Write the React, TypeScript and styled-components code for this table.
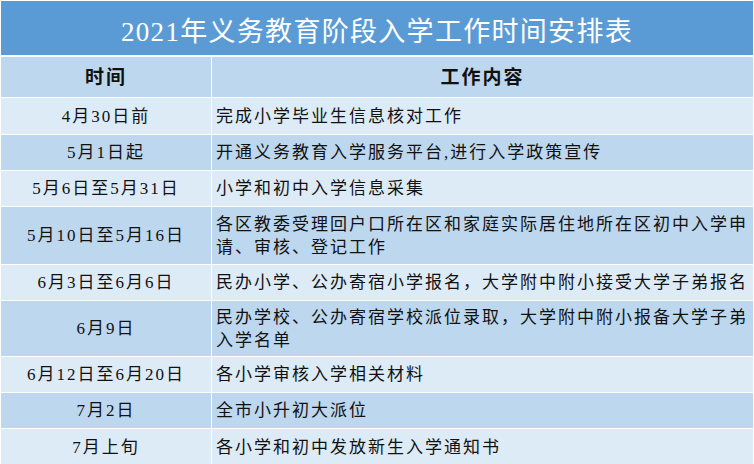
import React from 'react';
import styled, { createGlobalStyle } from 'styled-components';

const GlobalStyle = createGlobalStyle`
  html, body {
    margin: 0;
    padding: 0;
    background: #ffffff;
  }
  body {
    font-family: "Liberation Serif", "Noto Sans CJK SC", serif;
  }
`;

const Sheet = styled.div`
  width: 754px;
  height: 464px;
  box-sizing: border-box;
  padding: 1px 1px 0 1px;
  background: #ffffff;
  overflow: hidden;
`;

const Title = styled.div`
  height: 54px;
  background: #5b9bd5;
  color: #ffffff;
  display: flex;
  align-items: center;
  justify-content: center;
  font-size: 27px;
  letter-spacing: 1.3px;
  padding-top: 2px;
  box-sizing: border-box;
`;

const Grid = styled.div`
  margin-top: 2px;
  display: grid;
  grid-template-columns: 210px 1fr;
  gap: 1px;
  background: #ffffff;
`;

const Cell = styled.div<{ $shade: 'dark' | 'light'; $height: number; $center?: boolean; $bold?: boolean }>`
  height: ${(p) => p.$height}px;
  background: ${(p) => (p.$shade === 'dark' ? '#bdd7ee' : '#ddebf7')};
  color: #111111;
  display: flex;
  align-items: center;
  justify-content: ${(p) => (p.$center ? 'center' : 'flex-start')};
  padding: ${(p) => (p.$center ? '0' : '0 4px 0 4px')};
  box-sizing: border-box;
  font-size: ${(p) => (p.$bold ? '19px' : '17px')};
  font-weight: ${(p) => (p.$bold ? 700 : 400)};
  letter-spacing: 2px;
  line-height: 23px;
`;

const rows = [
  { time: '4月30日前', task: '完成小学毕业生信息核对工作', h: 36 },
  { time: '5月1日起', task: '开通义务教育入学服务平台,进行入学政策宣传', h: 35 },
  { time: '5月6日至5月31日', task: '小学和初中入学信息采集', h: 35 },
  {
    time: '5月10日至5月16日',
    task: ['各区教委受理回户口所在区和家庭实际居住地所在区初中入学申', '请、审核、登记工作'],
    h: 57,
  },
  { time: '6月3日至6月6日', task: '民办小学、公办寄宿小学报名，大学附中附小接受大学子弟报名', h: 35 },
  {
    time: '6月9日',
    task: ['民办学校、公办寄宿学校派位录取，大学附中附小报备大学子弟', '入学名单'],
    h: 55,
  },
  { time: '6月12日至6月20日', task: '各小学审核入学相关材料', h: 35 },
  { time: '7月2日', task: '全市小升初大派位', h: 35 },
  { time: '7月上旬', task: '各小学和初中发放新生入学通知书', h: 36 },
];

const App: React.FC = () => {
  return (
    <>
      <GlobalStyle />
      <Sheet>
        <Title>2021年义务教育阶段入学工作时间安排表</Title>
        <Grid>
          <Cell $shade="dark" $height={40} $center $bold>
            时间
          </Cell>
          <Cell $shade="dark" $height={40} $center $bold>
            工作内容
          </Cell>
          {rows.map((row, i) => {
            const shade = i % 2 === 0 ? 'light' : 'dark';
            return (
              <React.Fragment key={row.time}>
                <Cell $shade={shade} $height={row.h} $center>
                  {row.time}
                </Cell>
                <Cell $shade={shade} $height={row.h}>
                  {Array.isArray(row.task) ? (
                    <div>
                      {row.task[0]}
                      <br />
                      {row.task[1]}
                    </div>
                  ) : (
                    row.task
                  )}
                </Cell>
              </React.Fragment>
            );
          })}
        </Grid>
      </Sheet>
    </>
  );
};

export default App;
